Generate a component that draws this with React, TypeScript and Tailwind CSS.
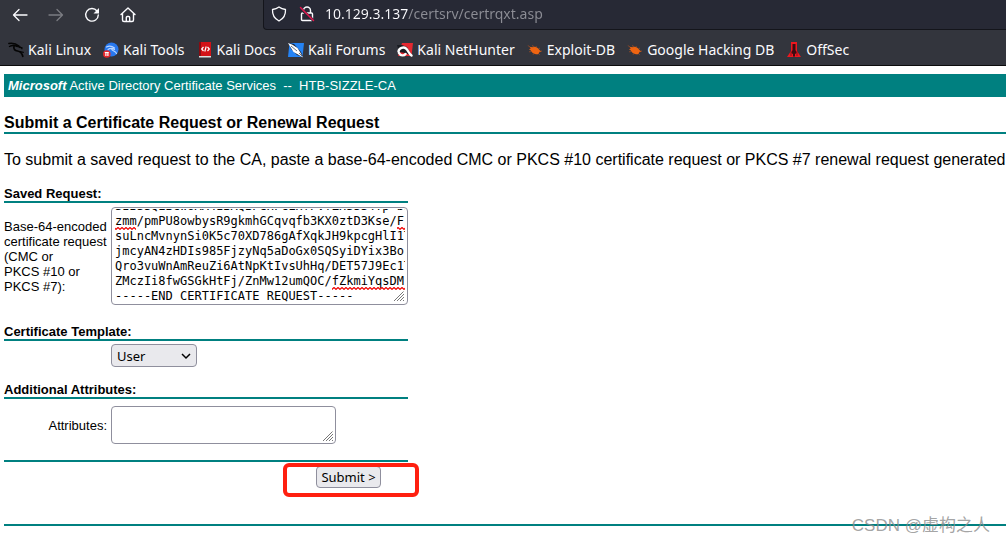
import React, { useLayoutEffect, useRef } from "react";

const REQUEST_TEXT = `-----BEGIN CERTIFICATE REQUEST-----
SIBSSQEBCwUAA4IBAQBPeHFGEHfPVfZHSSS4Tp-bE/
zmm/pmPU8owbysR9gkmhGCqvqfb3KX0ztD3Kse/F
suLncMvnynSi0K5c70XD786gAfXqkJH9kpcgHlI1T
jmcyAN4zHDIs985FjzyNq5aDoGx0SQSyiDYix3Bo
Qro3vuWnAmReuZi6AtNpKtIvsUhHq/DET57J9Ec1T
ZMczIi8fwGSGkHtFj/ZnMw12umQOC/fZkmiYqsDM
-----END CERTIFICATE REQUEST-----`;

function BugIcon() {
  return (
    <svg className="h-4 w-4" viewBox="0 0 16 16" aria-hidden="true">
      <path
        fill="#ee6411"
        d="M2.500 4.800 5.500 5.300c2.500-1.300 5.500.3 7 2.700l1.800 1.700-1.900.3c-.2 1.800-1.400 2.500-3.400 2.200-2.500-.4-4.500-1.700-5.200-3.700L2 7.200l1.800-.6z"
      />
      <path
        fill="none"
        stroke="#b8521c"
        strokeWidth=".6"
        d="M3 5 .8 3.500M6.500 5.500 5.500 3M9 5.500l.3-1.500M11.500 7l1.500-1M4.500 9.500 2 9.800M7 11.500l-1 1.300M12.500 9.500l2.500-.5M11.500 11.500l1.200 1.500"
      />
    </svg>
  );
}

function KaliLinuxIcon() {
  return (
    <svg className="h-4 w-4" viewBox="0 0 16 16" fill="none" stroke="#050505" strokeLinecap="round" strokeLinejoin="round" aria-hidden="true">
      <path strokeWidth="1.400" d="M.8 1.500C4 1 8 1.500 11 4M1.500 4.500C4 3 7 3.500 9.500 4.500" />
      <path strokeWidth="1.700" d="M6 4.500c-.8 2.700 1 4 3.500 4.500s4.500 1.700 5.300 5.300" />
      <path strokeWidth="1.200" d="M9 4.500c2-.5 4 .5 5 2.300M11 5.500l3 .2M12 9.500l3.300.8" />
    </svg>
  );
}

function KaliToolsIcon() {
  return (
    <svg className="h-4 w-4" viewBox="0 0 16 16" aria-hidden="true">
      <circle cx="8.500" cy="7.500" r="7" fill="#2878ee" />
      <path fill="none" stroke="#b9d5ff" strokeWidth="1.200" strokeLinecap="round" d="M3.500 5C6 3.500 9 4 11.500 6M5 7.500c2-1.500 4.500-1.500 6.500 0M8.500 6.500c0 3 4 2 5 5" />
      <circle cx="3.800" cy="12" r="3.800" fill="#e5272b" />
      <path stroke="#fff" strokeWidth="1.200" fill="none" d="M1.800 10.500h4M2.900 10.500V14M4.900 10.500V14" />
    </svg>
  );
}

function KaliDocsIcon() {
  return (
    <svg className="h-4 w-4" viewBox="0 0 16 16" aria-hidden="true">
      <path fill="#d31217" d="M2 0h12v14H2z" />
      <path fill="#880c12" d="M2 0h2v14H2z" />
      <path fill="#dedede" d="M2 14h12v1.500H2z" />
      <path fill="none" stroke="#fff" strokeWidth="1.200" d="M6.500 5 4.700 7l1.800 2M10.500 5l1.800 2-1.800 2M9.200 4.500 7.800 9.500" />
    </svg>
  );
}

function KaliForumsIcon() {
  return (
    <svg className="h-4 w-4" viewBox="0 0 16 16" aria-hidden="true">
      <path fill="#2583f4" d="M1.500 1H16l-1.500 14H0z" />
      <path fill="#172238" d="m1 1 5 1 7 8 2 5-6-2-6-6z" />
      <path fill="#fff" d="m0 1 4 1.500L9.500 6l2.500 4 3 5.500-5-3-4.500-2.500L3 6z" />
      <path stroke="#2a344a" strokeWidth=".7" d="m3 4 6 5M11 11l3 3" />
    </svg>
  );
}

function KaliNetHunterIcon() {
  return (
    <svg className="h-4 w-4" viewBox="0 0 16 16" aria-hidden="true">
      <path fill="#e52830" d="M5 1h11l-1.500 13H1z" />
      <path fill="#191c22" d="M0 3h5l5 2 5 9-7-3-6-1z" />
      <path fill="none" stroke="#fff" strokeWidth="2.400" strokeLinecap="round" d="M1.500 9.500C2 6 6.500 4.500 9 6.500s2.500 5 5.500 7M2 11c1.500 3 5 3 6.500 1" />
    </svg>
  );
}

function OffSecIcon() {
  return (
    <svg className="h-4 w-4" viewBox="0 0 16 16" aria-hidden="true">
      <path fill="#ed171f" d="M5 0h6v9l4 6H1l4-6z" />
      <path fill="#3b0c12" d="M6.500 2h3v6l1.300 3-1.800 1v2.500H7V12l-1.800-1 1.300-3z" />
      <path stroke="#8d1119" d="M5 9v5M11 9v5" />
    </svg>
  );
}

const bookmarks = [
  { name: "Kali Linux", icon: <KaliLinuxIcon /> },
  { name: "Kali Tools", icon: <KaliToolsIcon /> },
  { name: "Kali Docs", icon: <KaliDocsIcon /> },
  { name: "Kali Forums", icon: <KaliForumsIcon /> },
  { name: "Kali NetHunter", icon: <KaliNetHunterIcon /> },
  { name: "Exploit-DB", icon: <BugIcon /> },
  { name: "Google Hacking DB", icon: <BugIcon /> },
  { name: "OffSec", icon: <OffSecIcon /> },
];

function BrowserBar() {
  return (
    <header className="h-[66px] overflow-hidden border-b border-[#0c0c0d] bg-[#33353d] font-['Noto_Sans',sans-serif] text-[#fbfbfe]">
      <div className="flex h-[30px] items-start">
        <nav className="flex w-[263px] shrink-0 gap-5 pt-[7px] pl-3" aria-label="Browser">
          <button type="button" aria-label="Back">
            <svg className="h-4 w-4" viewBox="0 0 16 16" fill="none" stroke="currentColor" strokeWidth="1.300" strokeLinecap="round" strokeLinejoin="round">
              <path d="M15 8H1.500M7 2.500 1.500 8 7 13.500" />
            </svg>
          </button>
          <button type="button" aria-label="Forward" className="text-[#7b7c82]">
            <svg className="h-4 w-4" viewBox="0 0 16 16" fill="none" stroke="currentColor" strokeWidth="1.300" strokeLinecap="round" strokeLinejoin="round">
              <path d="M1 8h13.500M9 2.500 14.500 8 9 13.500" />
            </svg>
          </button>
          <button type="button" aria-label="Reload">
            <svg className="h-4 w-4" viewBox="0 0 16 16" fill="none" stroke="currentColor" strokeWidth="1.400" strokeLinecap="round">
              <path d="M13 4A6.300 6.300 0 1 0 14.300 8" />
              <path fill="currentColor" stroke="none" d="M15 1v5.500H9.500z" />
            </svg>
          </button>
          <button type="button" aria-label="Home">
            <svg className="h-4 w-4" viewBox="0 0 16 16" fill="none" stroke="currentColor" strokeWidth="1.400" strokeLinejoin="round" strokeLinecap="round">
              <path d="M1 7.500 8 1l7 6.500M2.500 6.500V13q0 1.500 1.500 1.500h8q1.500 0 1.500-1.500V6.500M6.300 14.500v-4q0-1 1-1h1.400q1 0 1 1v4" />
            </svg>
          </button>
        </nav>
        <div className="flex h-[30px] flex-1 items-center gap-[10px] rounded-bl border-b border-l border-[#14151b] bg-[#272935] pb-px pl-[7px]">
          <div className="flex shrink-0 gap-3">
            <svg className="h-4 w-4" viewBox="0 0 16 16" fill="none" stroke="currentColor" strokeWidth="1.300" strokeLinejoin="round" aria-hidden="true">
              <path d="M8 1c2 1.500 4 2.200 6.500 2.500C14.800 9 12 13 8 15 4 13 1.200 9 1.500 3.500 4 3.200 6 2.500 8 1z" />
            </svg>
            <svg className="h-4 w-4" viewBox="0 0 16 16" fill="none" aria-hidden="true">
              <path stroke="currentColor" strokeWidth="1.400" d="M4.500 7V4.500a3.500 3.500 0 0 1 7 0V7M3.500 7h9q1 0 1 1v5.500q0 1-1 1h-9q-1 0-1-1V8q0-1 1-1z" />
              <path stroke="#272935" strokeWidth="3" d="m1 2 13.500 12.500" />
              <path stroke="#e3174f" strokeWidth="1.500" strokeLinecap="round" d="m1.500 1.500 13 13" />
            </svg>
          </div>
          {/* the host part is bright, the path is dimmed */}
          <input
            className="min-w-0 flex-1 bg-[linear-gradient(90deg,#fbfbfe_83px,#8c8d95_83px)] bg-clip-text text-[14px] leading-5 text-transparent outline-none"
            type="text"
            aria-label="Address"
            spellCheck={false}
            defaultValue="10.129.3.137/certsrv/certrqxt.asp"
          />
        </div>
      </div>
      <nav className="flex h-10 items-center gap-3 pl-2 text-[14px] leading-5 whitespace-nowrap" aria-label="Bookmarks">
        {bookmarks.map((bookmark) => (
          <a key={bookmark.name} href="#bookmark" className="flex items-center gap-1">
            {bookmark.icon}
            {bookmark.name}
          </a>
        ))}
      </nav>
    </header>
  );
}

function ResizeGrip() {
  return (
    <svg className="pointer-events-none absolute right-0.5 bottom-0.5 h-3 w-3" viewBox="0 0 12 12" stroke="#777" strokeWidth="1" aria-hidden="true">
      <path d="M1 11 10.500 1.500M4 11l7-7M7 11l4-4M10 11l1-1" />
    </svg>
  );
}

function SavedRequest() {
  const ref = useRef<HTMLTextAreaElement>(null);

  // show the end of the pasted request
  useLayoutEffect(() => {
    if (ref.current) ref.current.scrollTop = ref.current.scrollHeight;
  }, []);

  return (
    <div className="relative rounded-sm border border-[#8f8f9d] pt-px pr-[2px] pl-[3px]">
      <textarea
        id="saved-request"
        ref={ref}
        wrap="off"
        spellCheck={false}
        defaultValue={REQUEST_TEXT}
        className="block h-[95px] w-full resize-none overflow-hidden font-['DejaVu_Sans_Mono',monospace] text-[12px] leading-[15px] whitespace-pre outline-none"
      />
      <svg className="pointer-events-none absolute inset-0 h-full w-full" aria-hidden="true">
        <defs>
          <pattern id="squiggle" y="1" width="4" height="3" patternUnits="userSpaceOnUse">
            <path d="M-1 3.300 2 .5l3 2.800" fill="none" stroke="#f00000" strokeWidth="1.200" />
          </pattern>
        </defs>
        <path fill="url(#squiggle)" d="M3 19h21v3H3zM285 19h8v3h-8zM220 79h73v3h-73z" />
      </svg>
      <ResizeGrip />
    </div>
  );
}

function SectionTitle({ children }: { children: React.ReactNode }) {
  return <h2 className="border-b-2 border-[#008080] text-[13px] leading-[15px] font-bold">{children}</h2>;
}

export default function App() {
  return (
    <div className="min-h-screen overflow-hidden bg-white font-['Liberation_Sans',Arial,sans-serif] text-black">
      <BrowserBar />
      <main className="pt-2 pl-1">
        <div className="h-[23px] bg-[#008080] pl-1 text-[13px] leading-[23px] whitespace-pre text-white">
          <b>
            <i>Microsoft</i>
          </b>
          {" Active Directory Certificate Services  --  HTB-SIZZLE-CA"}
        </div>
        <h1 className="mt-4 border-b-2 border-[#008080] text-[16px] leading-[19px] font-bold">
          Submit a Certificate Request or Renewal Request
        </h1>
        <p className="mt-4 text-[16px] leading-5 whitespace-nowrap">
          To submit a saved request to the CA, paste a base-64-encoded CMC or PKCS #10 certificate request or PKCS #7 renewal request generated
        </p>

        <form className="max-w-[404px] text-[13px] leading-[15px]" onSubmit={(e) => e.preventDefault()}>
          <section className="pt-4">
            <SectionTitle>Saved Request:</SectionTitle>
            <div className="grid grid-cols-[107px_1fr] items-center pt-1">
              <label htmlFor="saved-request" className="whitespace-nowrap">
                Base-64-encoded
                <br />
                certificate request
                <br />
                (CMC or
                <br />
                PKCS #10 or
                <br />
                PKCS #7):
              </label>
              <SavedRequest />
            </div>
          </section>

          <section className="pt-[19px]">
            <SectionTitle>Certificate Template:</SectionTitle>
            <div className="relative mt-[3px] ml-[107px] w-[86px]">
              <select
                aria-label="Certificate Template"
                className="block h-[23px] w-full appearance-none rounded border border-[#8f8f9d] bg-[#e9e9ed] pl-[5px] font-['Noto_Sans',sans-serif] text-[13px] leading-5"
              >
                <option>User</option>
              </select>
              <svg className="pointer-events-none absolute top-2 right-[6px] h-2 w-[10px]" viewBox="0 0 10 8" fill="none" stroke="#000" strokeWidth="1.500" aria-hidden="true">
                <path d="m1 2 4 4 4-4" />
              </svg>
            </div>
          </section>

          <section className="pt-[15px]">
            <SectionTitle>Additional Attributes:</SectionTitle>
            <div className="grid grid-cols-[107px_225px] items-center pt-[7px]">
              <label htmlFor="attributes" className="pr-1 text-right">
                Attributes:
              </label>
              <div className="relative">
                <textarea
                  id="attributes"
                  className="block h-[38px] w-full resize-none rounded-sm border border-[#8f8f9d] p-[3px] font-['DejaVu_Sans_Mono',monospace] text-[12px] leading-[15px]"
                />
                <ResizeGrip />
              </div>
            </div>
          </section>

          <div className="mt-4 border-t-2 border-[#008080] pt-1">
            <div className="relative ml-[312px] w-[65px]">
              <button
                type="submit"
                className="block h-[22px] w-full rounded border border-[#8f8f9d] bg-[#e9e9ed] font-['Noto_Sans',sans-serif] text-[13px] leading-5"
              >
                Submit &gt;
              </button>
              <div className="pointer-events-none absolute -top-[3px] -left-[33px] h-[34px] w-[136px] rounded-md border-4 border-[#ff2010]" />
            </div>
          </div>
        </form>

        <div className="relative mt-9 h-5 border-t-2 border-[#008080]">
          <span className="absolute -top-3 right-4 font-['Liberation_Sans','Noto_Sans_CJK_SC',sans-serif] text-[17px] leading-6 whitespace-nowrap text-[#8c8c8c]/80">
            CSDN @虚构之人
          </span>
        </div>
      </main>
    </div>
  );
}
